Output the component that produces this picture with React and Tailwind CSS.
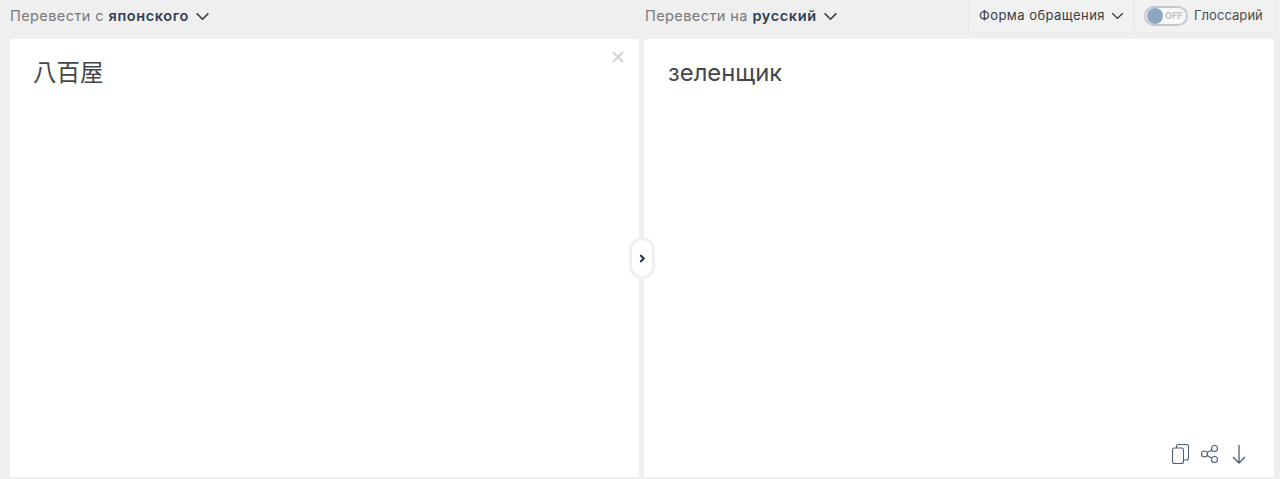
import React from "react";

const Chevron = ({ className }) => (
  <svg viewBox="0 0 16 10" fill="none" stroke="currentColor" strokeWidth="1.7" className={className}>
    <path d="M1.5 1.5 8 8l6.5-6.5" />
  </svg>
);

const LangSelect = ({ label, lang }) => (
  <div className="flex items-center text-[14.5px] leading-none text-[#77797c] tracking-[0.42px]">
    <span className="whitespace-pre">{label} </span>
    <span className="font-semibold text-[#2f4054] tracking-[0.62px]">{lang}</span>
    <Chevron className="ml-[6px] w-[15px] h-[9px] text-[#2f3b48]" />
  </div>
);

const App = () => {
  return (
    <div className="h-[479px] w-[1280px] overflow-hidden bg-[#efefef] font-['Inter',sans-serif] flex flex-col">
      <header className="h-[39px] flex shrink-0">
        <div className="w-[645px] pl-[10px] flex items-center pb-[6px]">
          <LangSelect label="Перевести с" lang="японского" />
        </div>
        <div className="flex-1 flex items-center justify-between pr-[6px]">
          <div className="pb-[6px]">
            <LangSelect label="Перевести на" lang="русский" />
          </div>
          <div className="flex h-[32px] self-start gap-[2px]">
            <div className="w-[164px] bg-[#f1f1f1] rounded-b-[3px] shadow-[0_0_2px_rgba(0,0,0,0.08)] flex items-center pl-[10px] text-[13px] tracking-[0.45px] text-[#3a3d40] pb-[1px]">
              Форма обращения
              <Chevron className="ml-[6px] w-[13px] h-[8px] text-[#2f3b48]" />
            </div>
            <div className="w-[139px] bg-[#f1f1f1] rounded-b-[3px] shadow-[0_0_2px_rgba(0,0,0,0.08)] flex items-center pl-[9px] text-[13px] text-[#4a4c4f] pb-[1px]">
              <div className="relative w-[44px] h-[20px] rounded-full border-2 border-[#c3c9cf] bg-[#f7f7f7] shrink-0">
                <div className="absolute left-[1px] top-0 w-[16px] h-[16px] rounded-full bg-[#8fa6bf]" />
                <span className="absolute left-[19px] top-[3px] text-[9px] leading-[10px] font-bold text-[#c0c4c8]">OFF</span>
              </div>
              <span className="ml-[6px] tracking-[0.05px]">Глоссарий</span>
            </div>
          </div>
        </div>
      </header>

      <main className="relative flex gap-[5px] pl-[10px] pr-[6px] h-[438px]">
        <section className="relative w-[629px] bg-white rounded-t-[3px] px-[23px] pt-[16px]">
          <div className="text-[23.5px] leading-[32px] text-[#44474a] font-['Noto_Sans_CJK_JP',sans-serif]">八百屋</div>
          <svg viewBox="0 0 12 12" className="absolute right-[15px] top-[12px] w-[12px] h-[12px]" stroke="#d4d4d4" strokeWidth="2.2" fill="none">
            <path d="M1 1l10 10M11 1 1 11" />
          </svg>
        </section>

        <section className="relative flex-1 bg-white rounded-t-[3px] px-[24px] pt-[18px]">
          <div className="text-[23.8px] leading-[32px] text-[#44474a]">зеленщик</div>
          <div className="absolute right-[25px] bottom-[12px] flex items-center gap-[9px] text-[#4c5f73]">
            <svg width="20" height="22" viewBox="0 0 20 22" fill="none" stroke="currentColor" strokeWidth="1.1">
              <rect x="1.5" y="5" width="11" height="15.5" rx="2" />
              <path d="M5.5 5V3.5a2 2 0 0 1 2-2h8a2 2 0 0 1 2 2V15a2 2 0 0 1-2 2h-3" />
            </svg>
            <svg width="20" height="22" viewBox="0 0 20 22" fill="none" stroke="currentColor" strokeWidth="1.1">
              <circle cx="4.5" cy="11" r="3" />
              <circle cx="14.5" cy="5.5" r="3" />
              <circle cx="14.5" cy="16.5" r="3" />
              <path d="M7.2 9.6l4.7-2.7M7.2 12.4l4.7 2.7" />
            </svg>
            <svg width="20" height="22" viewBox="0 0 20 22" fill="none" stroke="currentColor" strokeWidth="1.3">
              <path d="M10 2v18M4 14l6 6 6-6" />
            </svg>
          </div>
        </section>

        <div className="absolute left-[629px] top-[198px] w-[26px] h-[42px] pl-[1px] rounded-[13px] bg-white border-[3px] border-[#f0f0f0] flex items-center justify-center">
          <svg viewBox="0 0 8 10" className="w-[7px] h-[9px]" fill="none" stroke="#1f3550" strokeWidth="2.2">
            <path d="M1.5 1 5.5 5l-4 4" />
          </svg>
        </div>
      </main>
    </div>
  );
};

export default App;
